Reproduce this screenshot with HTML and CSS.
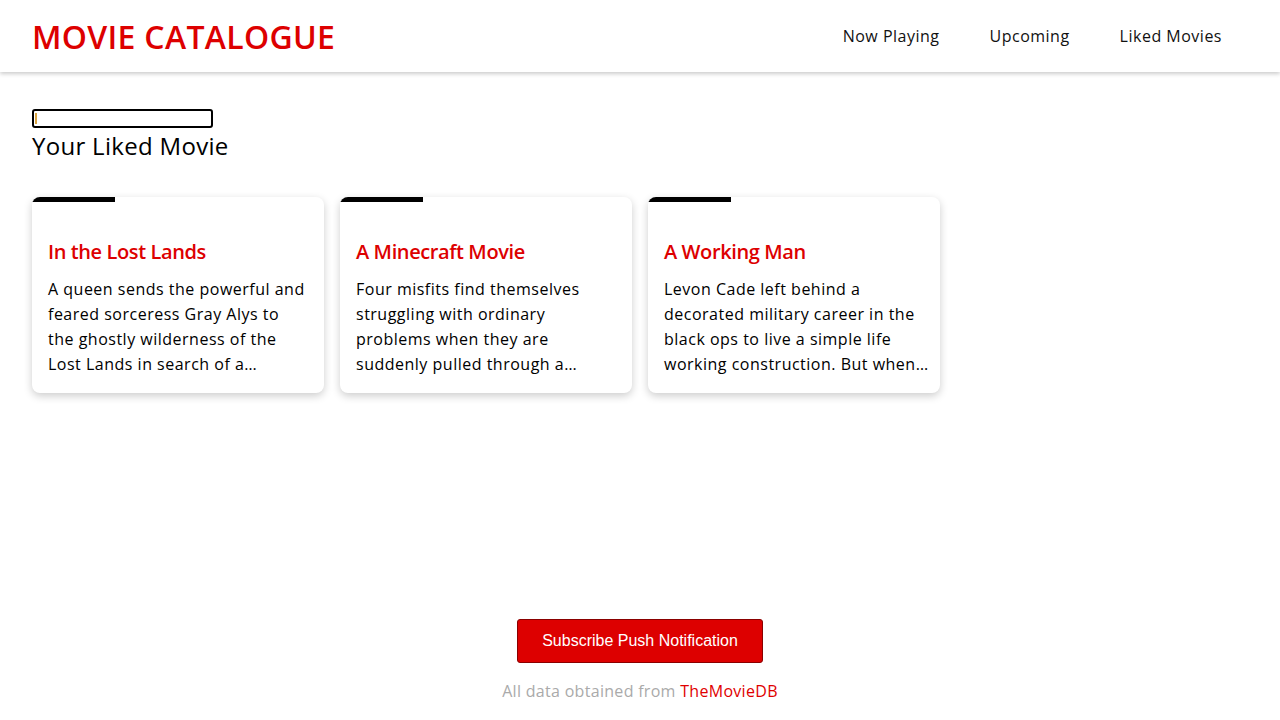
FILE: index.html
```html
<!DOCTYPE html>
<html lang="en">
<head>
<meta charset="utf-8">
<title>Movie Catalogue</title>
<link rel="stylesheet" href="styles.css">
</head>
<body>
<div class="page">
  <header class="app-bar">
    <h1 class="brand">MOVIE CATALOGUE</h1>
    <nav class="nav">
      <a class="nav-link" href="#">Now Playing</a>
      <a class="nav-link" href="#">Upcoming</a>
      <a class="nav-link" href="#">Liked Movies</a>
    </nav>
  </header>
  <main class="content">
    <div class="search-box"><span class="caret"></span></div>
    <h2 class="section-title">Your Liked Movie</h2>
    <div class="movie-list">
      <article class="movie-card">
        <div class="rating-bar"></div>
        <h3 class="movie-title">In the Lost Lands</h3>
        <p class="movie-desc">A queen sends the powerful and<br>feared sorceress Gray Alys to<br>the ghostly wilderness of the<br>Lost Lands in search of a…</p>
      </article>
      <article class="movie-card">
        <div class="rating-bar"></div>
        <h3 class="movie-title">A Minecraft Movie</h3>
        <p class="movie-desc">Four misfits find themselves<br>struggling with ordinary<br>problems when they are<br>suddenly pulled through a…</p>
      </article>
      <article class="movie-card">
        <div class="rating-bar"></div>
        <h3 class="movie-title">A Working Man</h3>
        <p class="movie-desc">Levon Cade left behind a<br>decorated military career in the<br>black ops to live a simple life<br>working construction. But when…</p>
      </article>
    </div>
  </main>
  <footer class="footer">
    <button class="subscribe-btn" type="button">Subscribe Push Notification</button>
    <p class="credit">All data obtained from <a class="credit-link" href="#">TheMovieDB</a></p>
  </footer>
</div>
</body>
</html>
```
FILE: styles.css
```css
* { box-sizing: border-box; }
html, body { margin: 0; padding: 0; }
body {
  font-family: "Open Sans", "DejaVu Sans", sans-serif;
  color: #000;
  background: #fff;
}
.page {
  min-height: 100vh;
  display: flex;
  flex-direction: column;
}
.app-bar {
  height: 72px;
  display: flex;
  align-items: center;
  justify-content: space-between;
  padding: 0 58px 0 32px;
  background: #fff;
  box-shadow: 0 2px 4px rgba(0,0,0,0.2);
}
.brand {
  margin: 0;
  font-size: 32px;
  font-weight: 600;
  color: #dd0000;
  letter-spacing: 0.3px;
}
.nav {
  display: flex;
  gap: 50px;
}
.nav-link {
  color: #111;
  text-decoration: none;
  font-size: 16px;
  letter-spacing: 0.5px;
}
.content {
  flex: 1;
  padding: 37px 32px 0;
}
.search-box {
  width: 181px;
  height: 19px;
  border: 2px solid #000;
  border-radius: 3px;
  display: flex;
  align-items: center;
  padding-left: 1px;
}
.caret {
  width: 2px;
  height: 11px;
  background: #d9a441;
}
.section-title {
  margin: 0;
  font-size: 24px;
  font-weight: 400;
  line-height: 36px;
  letter-spacing: 0.3px;
}
.movie-list {
  display: flex;
  gap: 16px;
  margin-top: 33px;
}
.movie-card {
  width: 292px;
  height: 196px;
  background: #fff;
  border-radius: 8px;
  overflow: hidden;
  box-shadow: 0 3px 8px rgba(0,0,0,0.2);
  padding: 0 16px 16px;
}
.rating-bar {
  width: 83px;
  height: 5px;
  background: #000;
  margin-left: -16px;
}
.movie-title {
  margin: 35px 0 0;
  font-size: 20px;
  font-weight: 600;
  line-height: 30px;
  color: #dd0000;
  letter-spacing: -0.4px;
}
.movie-desc {
  margin: 10px 0 0;
  font-size: 16px;
  line-height: 25px;
  white-space: nowrap;
  letter-spacing: 0.5px;
}
.footer {
  display: flex;
  flex-direction: column;
  align-items: center;
  padding-bottom: 17px;
}
.subscribe-btn {
  font-family: "Liberation Sans", Arial, sans-serif;
  font-size: 16px;
  color: #fff;
  background: #dd0000;
  border: 1px solid #8a0000;
  border-radius: 3px;
  width: 246px;
  height: 44px;
  padding: 0;
  cursor: pointer;
}
.credit {
  margin: 16px 0 0;
  font-size: 16px;
  line-height: 24px;
  color: #aaa;
  letter-spacing: 0.3px;
}
.credit-link {
  color: #e00000;
  text-decoration: none;
}
```
